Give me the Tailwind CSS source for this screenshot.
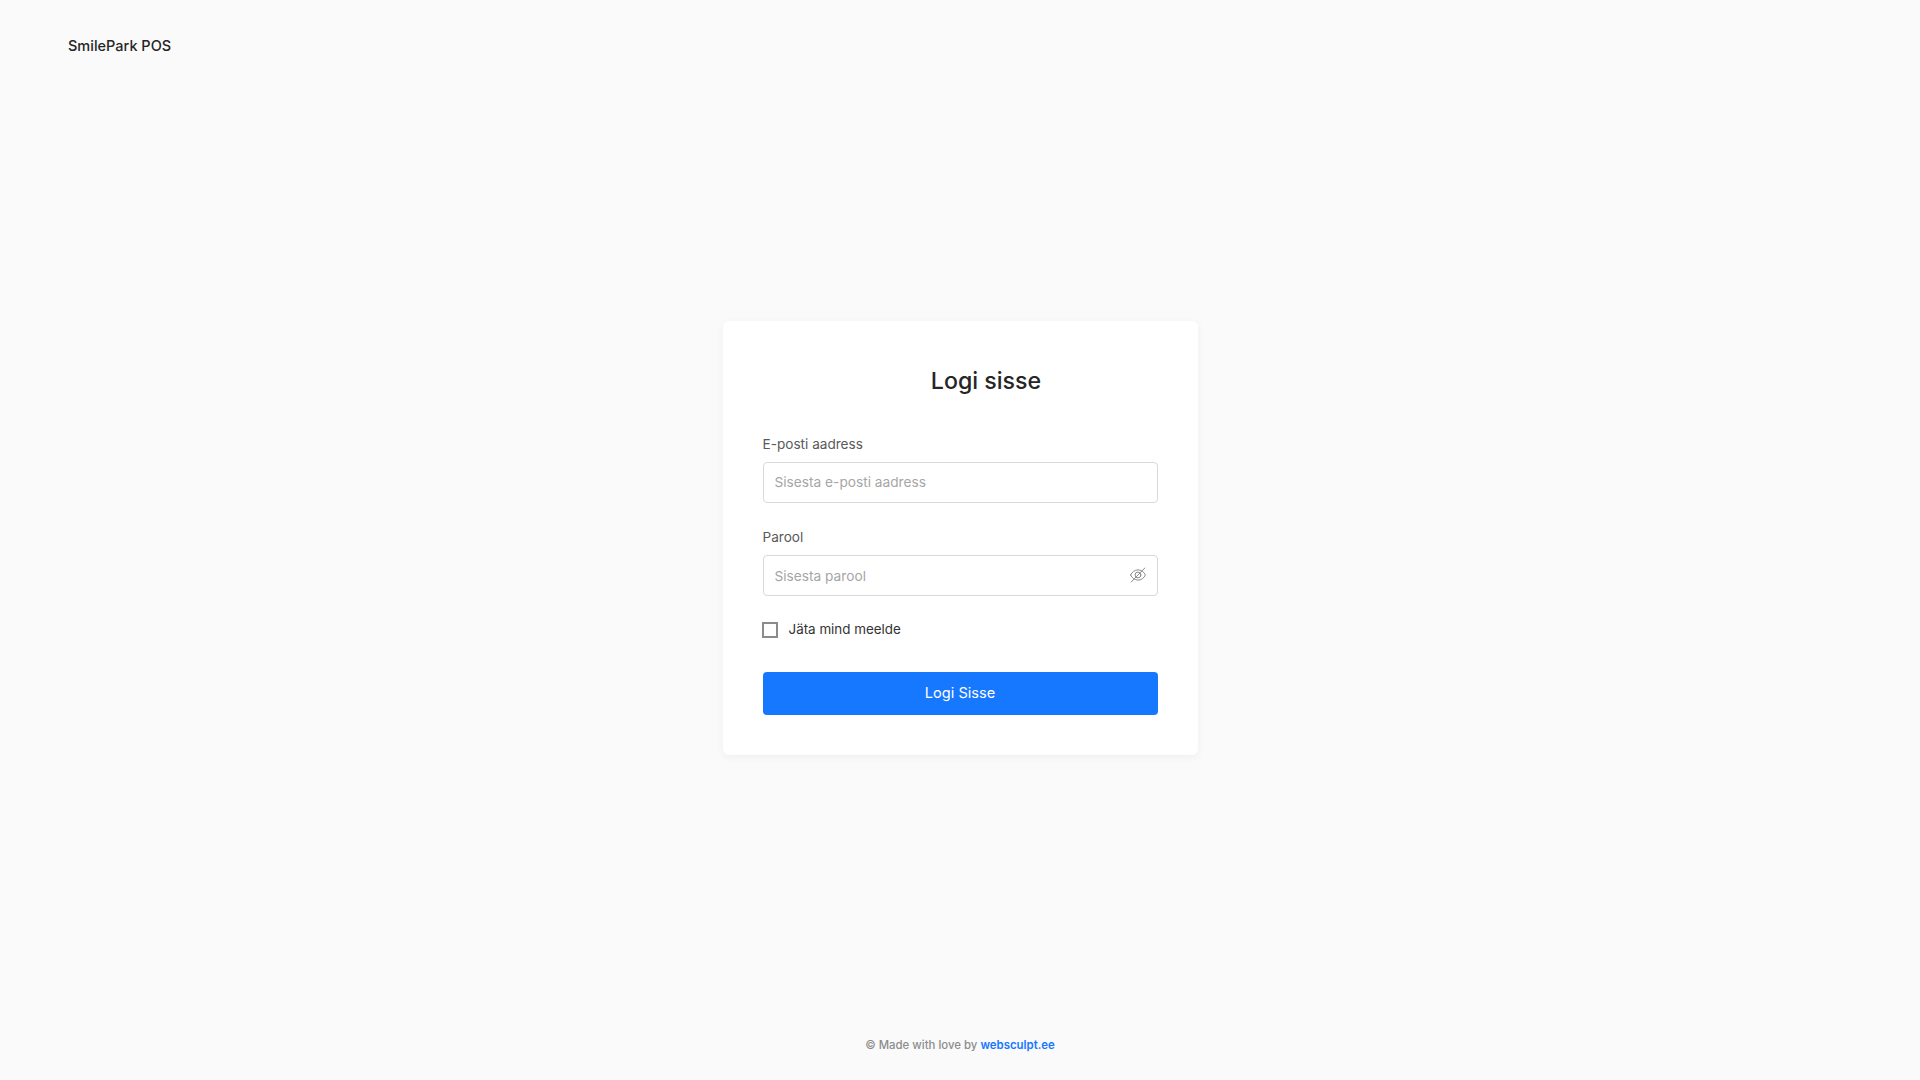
<!DOCTYPE html>
<html lang="et">
<head>
<meta charset="utf-8">
<title>SmilePark POS</title>
<script src="https://cdn.jsdelivr.net/npm/@tailwindcss/browser@4"></script>
</head>
<body class="bg-[#fafafa] font-['Inter','Liberation_Sans',sans-serif]">
<div class="flex h-screen flex-col">
  <header class="flex h-[91px] items-center pl-[68px] text-[14.500px] font-medium text-[#262626]">SmilePark POS</header>
  <main class="flex flex-1 items-center justify-center">
    <form class="w-[475px] rounded-[6px] bg-white p-10 shadow-[0_2px_8px_rgba(0,0,0,0.05)]">
      <h1 class="mt-px mb-[33.500px] pl-[52px] text-center text-[23.200px] leading-[38px] font-medium text-[#262626]">Logi sisse</h1>
      <label class="block">
        <span class="mb-[7px] block text-[13.600px] leading-[21px] text-[#595959]">E-posti aadress</span>
        <input type="text" placeholder="Sisesta e-posti aadress" class="block h-[41px] w-full rounded-[4px] border border-[#d9d9d9] bg-white px-[11px] text-[13.700px] text-[#262626] placeholder:text-[#a6a6a6]">
      </label>
      <label class="mt-[24.400px] block">
        <span class="mb-[7px] block text-[13.600px] leading-[21px] text-[#595959]">Parool</span>
        <span class="relative block">
          <input type="password" placeholder="Sisesta parool" class="block h-[41px] w-full rounded-[4px] border border-[#d9d9d9] bg-white pr-10 pl-[11px] text-[13.700px] text-[#262626] placeholder:text-[#a6a6a6]">
          <svg class="absolute top-[12px] right-[11.500px] h-4 w-4 text-[#8c8c8c]" viewBox="0 0 16 16" fill="none" stroke="currentColor" stroke-width="1" stroke-linecap="round" stroke-linejoin="round">
            <path d="M.6 8C2.200 4.600 4.900 2.900 8 2.900s5.800 1.700 7.400 5.100c-1.600 3.400-4.300 5.100-7.400 5.100S2.200 11.400.6 8Z"/>
            <circle cx="8" cy="8" r="2.900"/>
            <path d="M1.200 15 14.800 1"/>
          </svg>
        </span>
      </label>
      <label class="mt-[21.400px] flex h-6 items-center">
        <span class="-ml-px h-4 w-4 shrink-0 border-2 border-[#8c8c8c] bg-white"></span>
        <span class="ml-[11px] -translate-y-px text-[13.400px] text-[#333333]">Jäta mind meelde</span>
      </label>
      <button type="button" class="mt-[30px] block h-[43px] w-full rounded-[4px] bg-[#1677ff] pt-[2px] text-[14.600px] font-normal text-white">Logi Sisse</button>
    </form>
  </main>
  <footer class="h-[95px] pt-[50px] text-center text-[11.400px] leading-[20px] font-medium text-[#8c8c8c]">© Made with love by <a href="#" class="font-semibold text-[#1677ff]">websculpt.ee</a></footer>
</div>
</body>
</html>
